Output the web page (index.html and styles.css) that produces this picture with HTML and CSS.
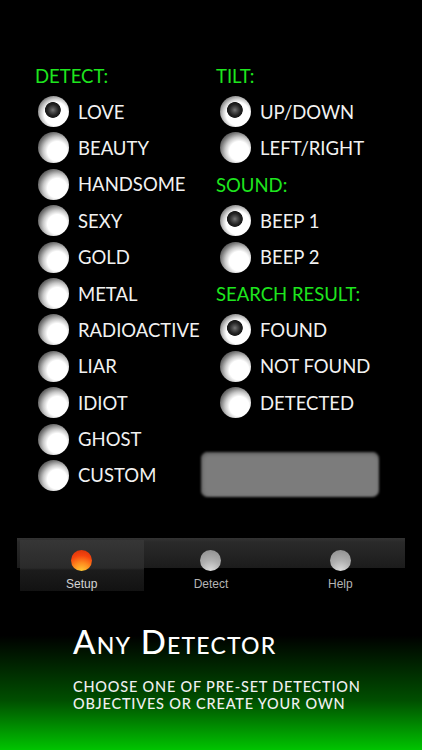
FILE: index.html
```html
<!DOCTYPE html>
<html lang="en">
<head>
    <meta charset="UTF-8">
    <meta name="viewport" content="width=device-width, initial-scale=1.0">
    <title>Any Detector</title>
    <link rel="stylesheet" href="styles.css">
</head>
<body>
    <main class="setup">
        <div class="column column-left">
            <h2 class="group-title">DETECT:</h2>
            <div class="option"><span class="radio checked"></span>LOVE</div>
            <div class="option"><span class="radio"></span>BEAUTY</div>
            <div class="option"><span class="radio"></span>HANDSOME</div>
            <div class="option"><span class="radio"></span>SEXY</div>
            <div class="option"><span class="radio"></span>GOLD</div>
            <div class="option"><span class="radio"></span>METAL</div>
            <div class="option"><span class="radio"></span>RADIOACTIVE</div>
            <div class="option"><span class="radio"></span>LIAR</div>
            <div class="option"><span class="radio"></span>IDIOT</div>
            <div class="option"><span class="radio"></span>GHOST</div>
            <div class="option"><span class="radio"></span>CUSTOM</div>
        </div>
        <div class="column column-right">
            <h2 class="group-title">TILT:</h2>
            <div class="option"><span class="radio checked"></span>UP/DOWN</div>
            <div class="option"><span class="radio"></span>LEFT/RIGHT</div>
            <h2 class="group-title">SOUND:</h2>
            <div class="option"><span class="radio checked"></span>BEEP 1</div>
            <div class="option"><span class="radio"></span>BEEP 2</div>
            <h2 class="group-title">SEARCH RESULT:</h2>
            <div class="option"><span class="radio checked"></span>FOUND</div>
            <div class="option"><span class="radio"></span>NOT FOUND</div>
            <div class="option"><span class="radio"></span>DETECTED</div>
            <div class="custom-box"></div>
        </div>
    </main>

    <nav class="tab-bar">
        <div class="tab active"><span class="tab-light"></span><span class="tab-label">Setup</span></div>
        <div class="tab"><span class="tab-light"></span><span class="tab-label">Detect</span></div>
        <div class="tab"><span class="tab-light"></span><span class="tab-label">Help</span></div>
    </nav>

    <section class="promo">
        <h1 class="promo-title">Any Detector</h1>
        <p class="promo-text">CHOOSE ONE OF PRE-SET DETECTION<br>OBJECTIVES OR CREATE YOUR OWN</p>
    </section>
</body>
</html>
```

FILE: styles.css
```css
:root {
    --row-height: 36.4px;
    --green: #1ee61e;
}

* {
    margin: 0;
    padding: 0;
    box-sizing: border-box;
}

body {
    width: 422px;
    height: 750px;
    overflow: hidden;
    background: #000;
    color: #f2f2f2;
    font-family: Lato, "Open Sans", sans-serif;
}

.setup {
    display: flex;
    padding: 57px 0 0 34px;
}

.column-left {
    width: 167px;
}

.column-left .group-title {
    padding-left: 1px;
}

.column-right {
    width: 178px;
}

.column-right .group-title {
    padding-left: 15px;
}

.column-right .option {
    padding-left: 19px;
}

.group-title {
    height: var(--row-height);
    padding-top: 1px;
    line-height: var(--row-height);
    font-size: 18.5px;
    font-weight: 400;
    color: var(--green);
    white-space: nowrap;
}

.option {
    display: flex;
    align-items: center;
    height: var(--row-height);
    padding-left: 4px;
    font-size: 18.5px;
    white-space: nowrap;
}

.radio {
    flex: none;
    width: 31px;
    height: 31px;
    margin-right: 9px;
    border-radius: 50%;
    background: radial-gradient(circle at 62% 62%, #fff 0, #fff 36%, #c8c8c8 52%, #7a7a7a 68%, #3a3a3a 84%, #1c1c1c 100%);
    filter: blur(0.5px);
}

.radio.checked {
    background:
        radial-gradient(circle at 48% 45%, #767676 0, #4c4c4c 11%, #222 24%, #1a1a1a 31%, #1a1a1a 32%, transparent 35%),
        radial-gradient(circle at 58% 58%, #fff 0, #fff 46%, #c8c8c8 60%, #7a7a7a 76%, #3a3a3a 92%, #1c1c1c 100%);
}

.custom-box {
    width: 178px;
    height: 45px;
    margin-top: 31px;
    border-radius: 7px;
    background: #7c7c7c;
    box-shadow: inset 0 2px 3px #5e5e5e, inset 2px 0 3px #666;
    filter: blur(1px);
}

.tab-bar {
    display: grid;
    grid-template-columns: repeat(3, 1fr);
    width: 388px;
    height: 53px;
    margin: 41px 0 0 17px;
    background: linear-gradient(#333 0, #2a2a2a 4px, #1c1c1c 30px, transparent 30px);
}

.tab {
    position: relative;
    display: flex;
    flex-direction: column;
    align-items: center;
    padding-top: 12px;
    font-family: "Liberation Sans", Arial, sans-serif;
    font-size: 12px;
    color: #b4b4b4;
}

.tab.active::before {
    content: "";
    position: absolute;
    top: 2px;
    right: 2px;
    bottom: 0;
    left: 3px;
    background: linear-gradient(#363636, #2a2a2a 28px, #1c1c1c 30px, #121212);
}

.tab-light,
.tab-label {
    position: relative;
}

.tab.active .tab-label {
    color: #d4d4d4;
}

.tab-light {
    width: 21px;
    height: 21px;
    margin-bottom: 6px;
    border-radius: 50%;
    background: radial-gradient(circle at 50% 100%, #dedede 0, #b0b0b0 45%, #8c8c8c 100%);
}

.tab.active .tab-light {
    background: radial-gradient(circle at 50% 105%, #ffd23a 0, #ff8a1e 38%, #f4440e 68%, #d0300a 100%);
}

.promo {
    height: 159px;
    padding: 33px 0 0 73px;
    background: linear-gradient(#000 0, #000 28%, #004f00 69%, #00c400 100%);
}

.promo-title {
    font-size: 33px;
    font-weight: 500;
    font-variant: small-caps;
    line-height: 34px;
    letter-spacing: 1.2px;
    color: #fff;
}

.promo-text {
    margin-top: 20px;
    font-size: 14.5px;
    font-weight: 500;
    line-height: 17px;
    letter-spacing: 0.8px;
    color: #f0f0f0;
}
```
